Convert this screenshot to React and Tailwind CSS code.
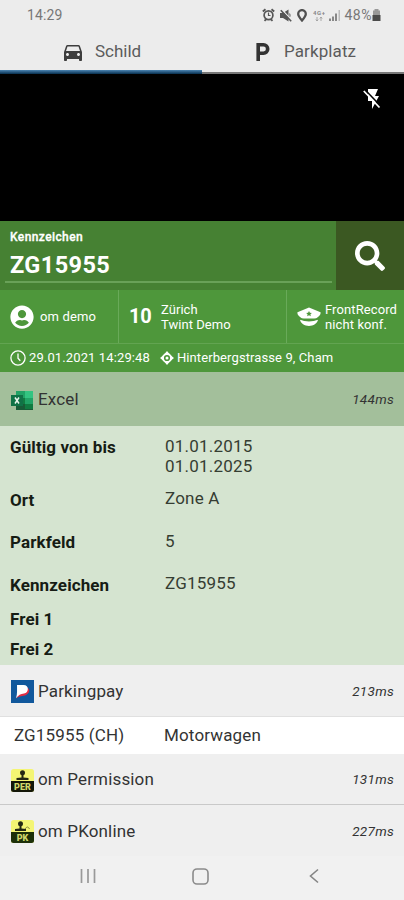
import React from "react";
import { MdDirectionsCar } from "react-icons/md";
import { FaSearch, FaUserCircle } from "react-icons/fa";

function AlarmIcon() {
  return (
    <svg className="mr-[5px] h-[14px] w-[13px]" viewBox="0 0 13 14">
      <path d="M.8 3.500 3.500 1.200M12.200 3.500 9.500 1.200M2.500 12.800l1.500-1.500M10.500 12.800 9 11.300" stroke="#555" strokeWidth="1.800" />
      <circle cx="6.500" cy="7.300" r="4.400" fill="none" stroke="#555" strokeWidth="1.700" />
      <path d="M6.500 4.500v3h2" fill="none" stroke="#555" strokeWidth="1.200" />
    </svg>
  );
}

function MuteIcon() {
  return (
    <svg className="mr-[5px] h-[13px] w-[12px]" viewBox="0 0 12 13">
      <path d="M0 4h3L8.500.5v12L3 9H0z" fill="#555" />
      <path d="M2 .8 12 11.500" stroke="#ececec" strokeWidth="1.300" />
      <path d="M.8 1.200 11.200 12.300" stroke="#555" strokeWidth="1.600" />
      <path d="M9.500 4.500q1 1.500.3 3.200" fill="none" stroke="#666" strokeWidth="1.100" />
    </svg>
  );
}

function PinIcon() {
  return (
    <svg className="mr-[6px] h-[13px] w-[10px]" viewBox="0 0 10 13">
      <path d="M5 11.500C2.500 8.500 1.200 6.800 1.200 4.900a3.800 3.800 0 0 1 7.600 0C8.800 6.800 7.500 8.500 5 11.500z" fill="none" stroke="#505050" strokeWidth="2.300" />
    </svg>
  );
}

function StatusBar() {
  return (
    <div className="flex h-[30px] items-center pl-[27px] pr-[23px] text-[14px] leading-[30px] text-[#777]">
      <span className="tracking-[0.1px]">14:29</span>
      <div className="ml-auto flex h-full items-center text-[#555]">
        <AlarmIcon />
        <MuteIcon />
        <PinIcon />
        <svg className="mr-[4px] h-[13px] w-[12px]" viewBox="0 0 12 13">
          <text x="0" y="6" fontSize="6" fontWeight="700" textLength="12" fill="#888">4G+</text>
          <path d="M4 8v4M2.800 10.500 4 12l1.200-1.500M8 12V8M6.800 9.500 8 8l1.200 1.500" fill="none" stroke="#999" strokeWidth="0.800" />
        </svg>
        <svg className="mr-[4px] h-[12px] w-[12px]" viewBox="0 0 12 12">
          <path d="M0 9.500h2V12H0zM3 7.500h2V12H3zM6 4.500h2V12H6z" fill="#888" />
          <path d="M9.500 1h1.500v11H9.500z" fill="#bbb" />
        </svg>
        <span className="text-[14px] tracking-[0.5px] text-[#777]">48%</span>
        <svg className="h-[13px] w-[9px]" viewBox="0 0 9 13">
          <path d="M2.500 0h4v1.500h-4zM1 1.500h7v5H1z" fill="#999" />
          <path d="M.5 6h8v6h-8z" fill="#4b4b4b" />
        </svg>
      </div>
    </div>
  );
}

function Tabs() {
  return (
    <div className="flex h-[44px] bg-[#ececec] text-[17px] leading-[43px] text-[#5b5b5b]">
      <div className="flex w-[202px] flex-col">
        <div className="flex h-[40px] items-center pl-[61px]">
          <MdDirectionsCar className="mt-[3px] size-[24px] text-[#3d3d3d]" />
          <span className="ml-[10px] mt-[3px] tracking-[0px]">Schild</span>
        </div>
        <div className="h-[4px] bg-linear-to-b from-[#4c86b4] to-[#07304f]" />
      </div>
      <div className="flex w-[202px] flex-col">
        <div className="flex h-[42px] items-center pl-[54px]">
          <svg className="mt-px h-[18px] w-[14px]" viewBox="0 0 14 18">
            <path d="M2.200 18V1.800h5.300a4.200 4.200 0 0 1 0 8.400H3.500" fill="none" stroke="#333" strokeWidth="3.600" />
          </svg>
          <span className="ml-[14px] mt-px tracking-[0.1px]">Parkplatz</span>
        </div>
        <div className="h-[2px] bg-[#777]" />
      </div>
    </div>
  );
}

function FlashOffIcon() {
  return (
    <svg className="h-[20px] w-[18px]" viewBox="0 0 18 20">
      <path d="M5 0h10l-3 7h4L9 20v-8H5z" fill="white" />
      <path d="M2 .8 18 17.500" stroke="black" strokeWidth="1.600" />
      <path d="M.8 2 16.500 18.500" stroke="white" strokeWidth="1.800" />
    </svg>
  );
}

function OfficerHat() {
  return (
    <svg className="h-[20px] w-[24px] shrink-0" viewBox="0 0 24 20">
      <path d="M12 .5 23.500 5.300c.8 2.200-2 4.800-4.500 6.200H5C2.500 10.100-.3 7.500.5 5.300z" fill="white" />
      <path d="M3 12.800q9 3.200 18 0c-.6 3.700-4.700 6.200-9 6.200s-8.400-2.500-9-6.200z" fill="white" />
      <path d="M3.500 11.800q8.500 2.800 17 0" fill="none" stroke="#4e973b" strokeWidth="1.300" />
      <path d="m12 4 .9 1.800 2 .2-1.500 1.300.4 2-1.800-1-1.800 1 .4-2L9.100 6l2-.2z" fill="#4e973b" />
    </svg>
  );
}

function ClockIcon() {
  return (
    <svg className="size-[16px]" viewBox="0 0 16 16">
      <circle cx="8" cy="8" r="7.100" fill="none" stroke="white" strokeWidth="1.300" />
      <path d="M8 3.500V8.300l2.300 2.400" fill="none" stroke="white" strokeWidth="1.300" />
    </svg>
  );
}

function LocationMark() {
  return (
    <svg className="size-[14px]" viewBox="0 0 14 14">
      <path d="m7 0 2.500 3H4.500zM14 7l-3 2.500v-5zM7 14l-2.500-3h5zM0 7l3-2.500v5z" fill="white" />
      <circle cx="7" cy="7" r="4" fill="none" stroke="white" strokeWidth="1.800" />
      <circle cx="7" cy="7" r="1.500" fill="white" />
    </svg>
  );
}

function SearchHeader() {
  return (
    <div className="flex h-[69px] bg-[#468133] text-white">
      <div className="w-[336px] pl-[5px] pr-[4px]">
        <div className="h-[62px] border-b-2 border-[#69a158] pl-[5px]">
          <div className="pt-[8px] text-[12px] font-medium leading-[16px] tracking-[0.4px] [-webkit-text-stroke:0.3px]">Kennzeichen</div>
          <div className="pt-[6px] text-[23.500px] font-bold leading-[28px] tracking-[0.4px]">ZG15955</div>
        </div>
      </div>
      <div className="flex w-[68px] items-center justify-center bg-[#3b5822]">
        <FaSearch className="size-[30px]" />
      </div>
    </div>
  );
}

function InfoRow() {
  return (
    <div className="bg-[#4e973b] text-[13px] leading-[15px] text-white">
      <div className="flex h-[54px] border-b border-[#62a451]">
        <div className="flex w-[119px] items-center border-r border-[#69aa59] pl-[10px]">
          <FaUserCircle className="size-[24px]" />
          <span className="ml-[6px] tracking-[0.15px]">om demo</span>
        </div>
        <div className="flex w-[168px] items-center border-r border-[#69aa59] pl-[10px]">
          <span className="w-[22px] text-[20px] font-bold tracking-[-0.3px]">10</span>
          <span className="ml-[10px] tracking-[0.05px]">Zürich<br />Twint Demo</span>
        </div>
        <div className="flex items-center pl-[10px]">
          <OfficerHat />
          <span className="ml-[4px] whitespace-nowrap tracking-[0.1px]">FrontRecord<br />nicht konf.</span>
        </div>
      </div>
      <div className="flex h-[28px] items-center pb-px pl-[10px] text-[13px]">
        <ClockIcon />
        <span className="ml-[3px] tracking-[0.12px]">29.01.2021 14:29:48</span>
        <span className="ml-[10px]"><LocationMark /></span>
        <span className="ml-[3px] tracking-[0.1px]">Hinterbergstrasse 9, Cham</span>
      </div>
    </div>
  );
}

function ExcelIcon() {
  return (
    <svg className="mt-[3px] h-[22px] w-[23px]" viewBox="0 0 23 22">
      <path d="M5 1h9v7H5z" fill="#21a366" />
      <path d="M14 1h8v7h-8z" fill="#33c481" />
      <path d="M5 8h9v6H5z" fill="#107c41" />
      <path d="M14 8h8v6h-8z" fill="#21a366" />
      <path d="M5 14h17v6H5z" fill="#185c37" />
      <path d="M14 14h8v5h-8z" fill="#107c41" />
      <path d="M0 5h12v11H0z" fill="#107246" />
      <path d="m4 7.500 4 6M8 7.500l-4 6" stroke="#e8f5ec" strokeWidth="1.500" />
    </svg>
  );
}

function ParkingpayIcon() {
  return (
    <svg className="mt-px h-[23px] w-[23px]" viewBox="0 0 23 23">
      <path d="M0 0h23v23H0z" fill="#11589c" />
      <path d="M15.500 7c4.500 2 3 7-1.500 8.500-4 1.200-6.500.5-9 3l3-5z" fill="#e12c43" />
      <path d="M6 5h6.500c6 0 5.500 8 .5 8.500-3.500.4-5.500 1.500-8 4.800C6.500 14 6 9 6 5z" fill="white" />
    </svg>
  );
}

function StampIcon({ label, wave }) {
  return (
    <svg className="mt-[2px] h-[23px] w-[23px]" viewBox="0 0 23 23">
      <rect width="23" height="23" rx="2.500" fill="#f4f573" />
      <circle cx={wave ? 9.500 : 11.500} cy="3.800" r="2.500" fill="#242814" />
      <path d={wave ? "M8.500 5h2v3.500l4.500.5v2H4V9l4.500-.5z" : "M10.500 5h2v3.500l5 .5v2h-12V9l5-.5z"} fill="#242814" />
      {wave && <path d="M14 9q2.500-4 4.500 0" fill="none" stroke="#87883e" strokeWidth="1" />}
      <path d="M0 12h23v8.500a2.500 2.500 0 0 1-2.500 2.500h-18A2.500 2.500 0 0 1 0 20.500z" fill={wave ? "#1d3009" : "#141708"} />
      <text x="11.500" y="20.500" textAnchor="middle" fontSize="9" fontWeight="900" fill="#cfd66b">{label}</text>
    </svg>
  );
}

function ResultHeader({ icon, name, time, className }) {
  return (
    <div className={"flex items-center pl-[11px] pr-[10px] text-[17px] leading-[24px] text-[#333] " + className}>
      {icon}
      <span className="ml-[4px] tracking-[0.150px]">{name}</span>
      <span className="ml-auto text-[13.500px] italic tracking-[0.3px]">{time}</span>
    </div>
  );
}

function DetailRow({ label, children, className, valueClassName = "" }) {
  return (
    <div className={"flex pl-[10px] leading-[20px] " + className}>
      <div className="w-[155px] text-[17px] font-bold tracking-[0.1px] text-[#161c14]">{label}</div>
      <div className={"text-[17px] tracking-[0.2px] text-[#353d32] " + valueClassName}>{children}</div>
    </div>
  );
}

export default function App() {
  return (
    <div className="flex h-[900px] w-[404px] flex-col overflow-hidden bg-[#ececec] font-['Roboto','Liberation_Sans',sans-serif]">
      <StatusBar />
      <Tabs />
      <div className="flex h-[147px] justify-end bg-black pr-[23px] pt-[15px]">
        <FlashOffIcon />
      </div>
      <SearchHeader />
      <InfoRow />
      <ResultHeader icon={<ExcelIcon />} name="Excel" time="144ms" className="h-[54px] bg-[#a3bf9b]" />
      <div className="h-[239px] bg-[#d5e4d0]">
        <DetailRow label="Gültig von bis" className="h-[52px] pt-[11px]" valueClassName="-mt-px">01.01.2015<br />01.01.2025</DetailRow>
        <DetailRow label="Ort" className="h-[42px] pt-[12px]" valueClassName="-mt-[2px]">Zone A</DetailRow>
        <DetailRow label="Parkfeld" className="h-[43px] pt-[12px]" valueClassName="-mt-px">5</DetailRow>
        <DetailRow label="Kennzeichen" className="h-[40px] pt-[12px]" valueClassName="-mt-[2px]">ZG15955</DetailRow>
        <DetailRow label="Frei 1" className="h-[30px] pt-[6px]" />
        <DetailRow label="Frei 2" className="h-[30px] pt-[6px]" />
      </div>
      <ResultHeader icon={<ParkingpayIcon />} name="Parkingpay" time="213ms" className="h-[52px] border-b border-[#e0e0e0] bg-[#efefef]" />
      <div className="flex h-[37px] items-center bg-white pl-[14px] text-[17px] tracking-[0.150px] text-[#333]">
        <span className="w-[150px]">ZG15955 (CH)</span>
        <span>Motorwagen</span>
      </div>
      <ResultHeader icon={<StampIcon label="PER" />} name="om Permission" time="131ms" className="h-[51px] border-b border-[#c9c9c9] bg-[#efefef]" />
      <ResultHeader icon={<StampIcon label="PK" wave />} name="om PKonline" time="227ms" className="h-[51px] bg-[#efefef]" />
      <div className="flex h-[44px] items-start bg-[#f1f1f1] pl-[80px] pt-[12px]">
        <svg className="h-[16px] w-[16px]" viewBox="0 0 16 16">
          <path d="M1.500 1v14M8 1v14M14.500 1v14" stroke="#999" strokeWidth="1.700" />
        </svg>
        <svg className="ml-[96px] h-[17px] w-[17px]" viewBox="0 0 17 17">
          <rect x="1" y="1" width="15" height="15" rx="4" fill="none" stroke="#8b8b8b" strokeWidth="1.600" />
        </svg>
        <svg className="ml-[100px] h-[16px] w-[10px]" viewBox="0 0 10 16">
          <path d="M9 1.500 1.500 8 9 14.500" fill="none" stroke="#858585" strokeWidth="1.600" />
        </svg>
      </div>
    </div>
  );
}
